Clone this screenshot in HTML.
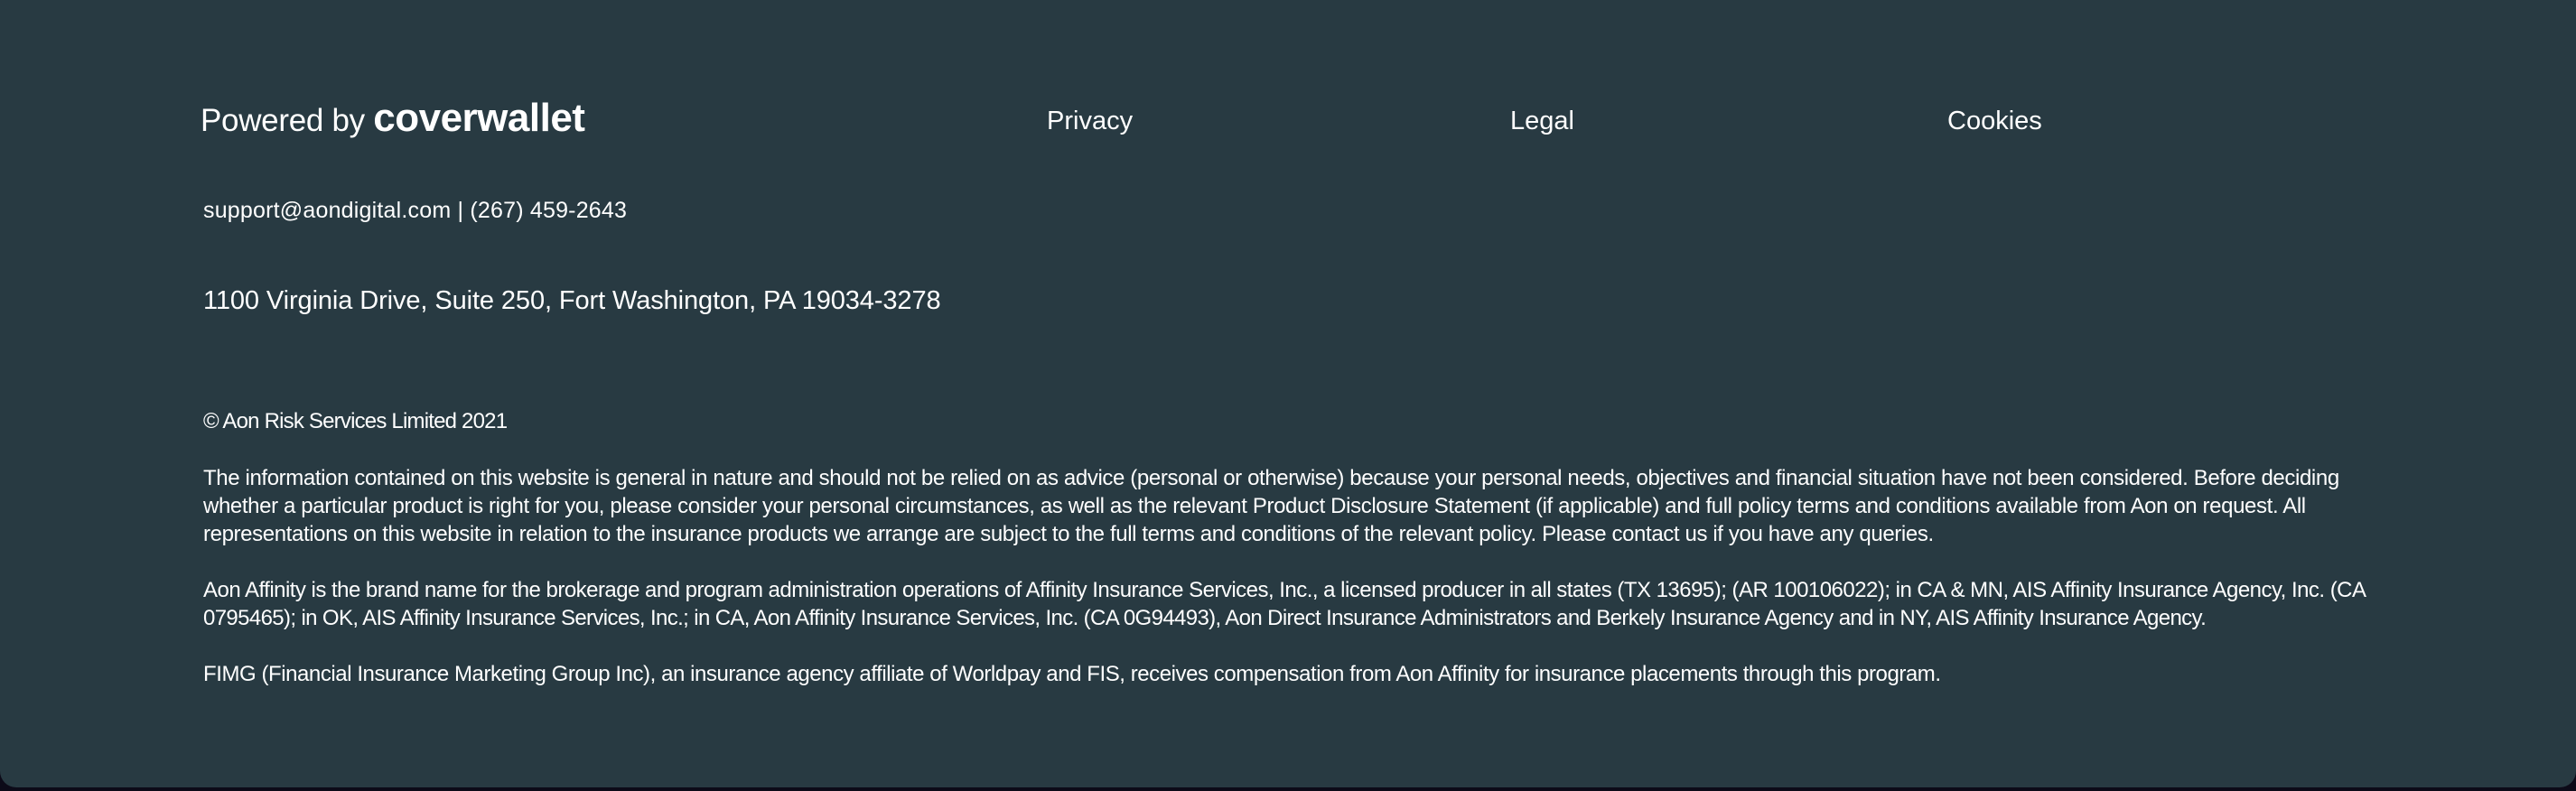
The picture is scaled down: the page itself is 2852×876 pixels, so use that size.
<!DOCTYPE html>
<html><head><meta charset="utf-8"><style>
html,body{margin:0;padding:0;width:2852px;height:876px;background:#0c0a18;overflow:hidden}
.f{position:absolute;left:0;top:0;width:2852px;height:872px;background:#283a42;border-radius:0 0 18px 18px;font-family:"Liberation Sans",sans-serif;color:#fff}
.a{position:absolute;white-space:nowrap}
.p{font-size:24px;line-height:31px}
</style></head><body><div class="f">
<div class="a" style="left:222px;top:106px;font-size:35px;letter-spacing:-0.3px">Powered by <span style="font-weight:bold;font-size:44px;letter-spacing:-0.5px">coverwallet</span></div>
<div class="a" style="left:1159px;top:118px;font-size:29px">Privacy</div>
<div class="a" style="left:1672px;top:118px;font-size:29px">Legal</div>
<div class="a" style="left:2156px;top:118px;font-size:29px">Cookies</div>
<div class="a" style="left:225px;top:219px;font-size:25px;letter-spacing:0.2px">support@aondigital.com | (267) 459-2643</div>
<div class="a" style="left:225px;top:317px;font-size:29px;letter-spacing:-0.1px">1100 Virginia Drive, Suite 250, Fort Washington, PA 19034-3278</div>
<div class="a p" style="left:225px;top:451px;letter-spacing:-0.8px">© Aon Risk Services Limited 2021</div>
<div class="a p" style="left:225px;top:514px;letter-spacing:-0.38px">The information contained on this website is general in nature and should not be relied on as advice (personal or otherwise) because your personal needs, objectives and financial situation have not been considered. Before deciding<br>whether a particular product is right for you, please consider your personal circumstances, as well as the relevant Product Disclosure Statement (if applicable) and full policy terms and conditions available from Aon on request. All<br>representations on this website in relation to the insurance products we arrange are subject to the full terms and conditions of the relevant policy. Please contact us if you have any queries.</div>
<div class="a p" style="left:225px;top:638px;letter-spacing:-0.52px">Aon Affinity is the brand name for the brokerage and program administration operations of Affinity Insurance Services, Inc., a licensed producer in all states (TX 13695); (AR 100106022); in CA &amp; MN, AIS Affinity Insurance Agency, Inc. (CA<br><span style="letter-spacing:-0.63px">0795465); in OK, AIS Affinity Insurance Services, Inc.; in CA, Aon Affinity Insurance Services, Inc. (CA 0G94493), Aon Direct Insurance Administrators and Berkely Insurance Agency and in NY, AIS Affinity Insurance Agency.</span></div>
<div class="a p" style="left:225px;top:731px;letter-spacing:-0.44px">FIMG (Financial Insurance Marketing Group Inc), an insurance agency affiliate of Worldpay and FIS, receives compensation from Aon Affinity for insurance placements through this program.</div>
</div></body></html>
